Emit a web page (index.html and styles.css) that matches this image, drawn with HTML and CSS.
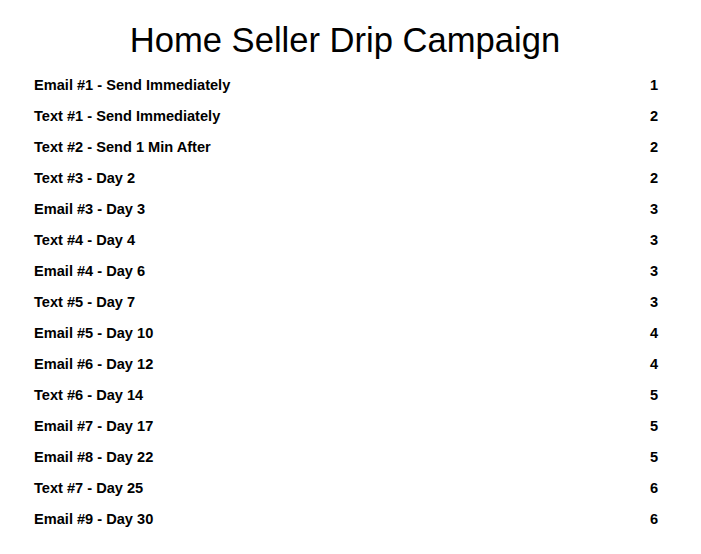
FILE: index.html
```html
<!DOCTYPE html>
<html>
<head>
<meta charset="utf-8">
<link rel="stylesheet" href="styles.css">
</head>
<body>
<h1 class="title">Home Seller Drip Campaign</h1>
<ul class="toc">
<li class="row"><span>Email #1 - Send Immediately</span><span>1</span></li>
<li class="row"><span>Text #1 - Send Immediately</span><span>2</span></li>
<li class="row"><span>Text #2 - Send 1 Min After</span><span>2</span></li>
<li class="row"><span>Text #3 - Day 2</span><span>2</span></li>
<li class="row"><span>Email #3 - Day 3</span><span>3</span></li>
<li class="row"><span>Text #4 - Day 4</span><span>3</span></li>
<li class="row"><span>Email #4 - Day 6</span><span>3</span></li>
<li class="row"><span>Text #5 - Day 7</span><span>3</span></li>
<li class="row"><span>Email #5 - Day 10</span><span>4</span></li>
<li class="row"><span>Email #6 - Day 12</span><span>4</span></li>
<li class="row"><span>Text #6 - Day 14</span><span>5</span></li>
<li class="row"><span>Email #7 - Day 17</span><span>5</span></li>
<li class="row"><span>Email #8 - Day 22</span><span>5</span></li>
<li class="row"><span>Text #7 - Day 25</span><span>6</span></li>
<li class="row"><span>Email #9 - Day 30</span><span>6</span></li>
</ul>
</body>
</html>
```
FILE: styles.css
```css
html, body {
  margin: 0;
  padding: 0;
  background: #fff;
  color: #000;
  font-family: "Liberation Sans", Arial, sans-serif;
}
body {
  width: 701px;
  height: 554px;
  overflow: hidden;
}
.title {
  margin: 0;
  padding: 20px 11px 0 0;
  font-size: 34.6px;
  font-weight: normal;
  line-height: 40px;
  text-align: center;
}
.toc {
  list-style: none;
  margin: 10px 0 0 0;
  padding: 0 43px 0 34px;
}
.row {
  display: flex;
  justify-content: space-between;
  font-size: 14.6px;
  font-weight: bold;
  line-height: 31px;
  height: 31px;
}
```
